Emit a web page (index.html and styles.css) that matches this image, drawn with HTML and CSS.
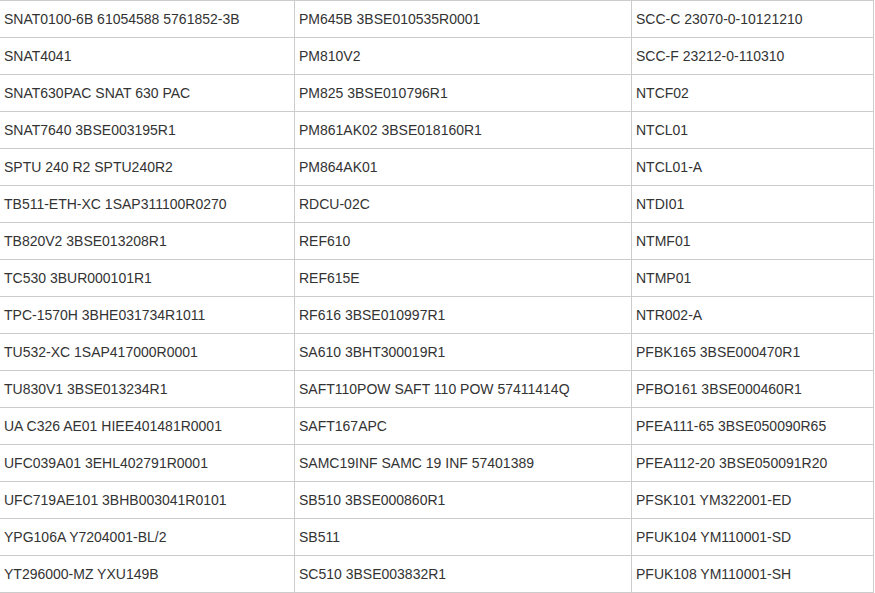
FILE: index.html
```html
<!DOCTYPE html>
<html>
<head>
<meta charset="utf-8">
<link rel="stylesheet" href="styles.css">
</head>
<body>
<table class="parts">
<colgroup><col class="c1"><col class="c2"><col class="c3"></colgroup>
<tbody>
<tr><td>SNAT0100-6B 61054588 5761852-3B</td><td>PM645B 3BSE010535R0001</td><td>SCC-C 23070-0-10121210</td></tr>
<tr><td>SNAT4041</td><td>PM810V2</td><td>SCC-F 23212-0-110310</td></tr>
<tr><td>SNAT630PAC SNAT 630 PAC</td><td>PM825 3BSE010796R1</td><td>NTCF02</td></tr>
<tr><td>SNAT7640 3BSE003195R1</td><td>PM861AK02 3BSE018160R1</td><td>NTCL01</td></tr>
<tr><td>SPTU 240 R2 SPTU240R2</td><td>PM864AK01</td><td>NTCL01-A</td></tr>
<tr><td>TB511-ETH-XC 1SAP311100R0270</td><td>RDCU-02C</td><td>NTDI01</td></tr>
<tr><td>TB820V2 3BSE013208R1</td><td>REF610</td><td>NTMF01</td></tr>
<tr><td>TC530 3BUR000101R1</td><td>REF615E</td><td>NTMP01</td></tr>
<tr><td>TPC-1570H 3BHE031734R1011</td><td>RF616 3BSE010997R1</td><td>NTR002-A</td></tr>
<tr><td>TU532-XC 1SAP417000R0001</td><td>SA610 3BHT300019R1</td><td>PFBK165 3BSE000470R1</td></tr>
<tr><td>TU830V1 3BSE013234R1</td><td>SAFT110POW SAFT 110 POW 57411414Q</td><td>PFBO161 3BSE000460R1</td></tr>
<tr><td>UA C326 AE01 HIEE401481R0001</td><td>SAFT167APC</td><td>PFEA111-65 3BSE050090R65</td></tr>
<tr><td>UFC039A01 3EHL402791R0001</td><td>SAMC19INF SAMC 19 INF 57401389</td><td>PFEA112-20 3BSE050091R20</td></tr>
<tr><td>UFC719AE101 3BHB003041R0101</td><td>SB510 3BSE000860R1</td><td>PFSK101 YM322001-ED</td></tr>
<tr><td>YPG106A Y7204001-BL/2</td><td>SB511</td><td>PFUK104 YM110001-SD</td></tr>
<tr><td>YT296000-MZ YXU149B</td><td>SC510 3BSE003832R1</td><td>PFUK108 YM110001-SH</td></tr>
</tbody>
</table>
</body>
</html>
```
FILE: styles.css
```css
html, body {
  margin: 0;
  padding: 0;
  background: #fff;
}
.parts {
  table-layout: fixed;
  width: 874px;
  border-collapse: separate;
  border-spacing: 0;
  border-top: 1px solid #ccc;
  font-family: "Liberation Sans", Arial, sans-serif;
  font-size: 14px;
  color: #333;
}
.c1 { width: 295px; }
.c2 { width: 337px; }
.c3 { width: 242px; }
.parts td {
  box-sizing: border-box;
  padding: 0 4px;
  line-height: 36px;
  border-right: 1px solid #ccc;
  border-bottom: 1px solid #ccc;
  white-space: nowrap;
  vertical-align: middle;
}
```
